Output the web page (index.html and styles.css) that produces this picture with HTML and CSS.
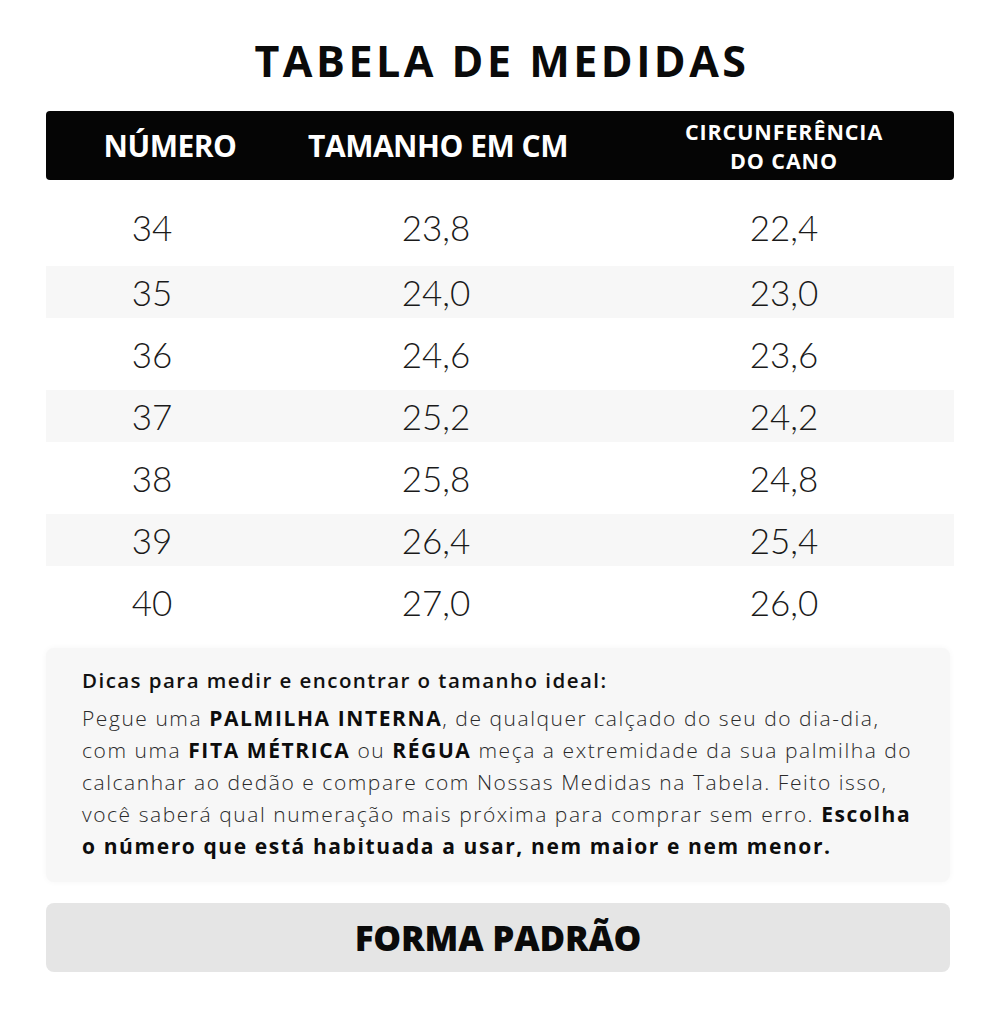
FILE: index.html
```html
<!DOCTYPE html>
<html lang="pt-BR">
<head>
<meta charset="utf-8">
<title>Tabela de Medidas</title>
<link rel="stylesheet" href="styles.css">
</head>
<body>
<main class="page">
  <h1 class="title">TABELA DE MEDIDAS</h1>

  <section class="table">
    <div class="head">
      <div class="hcell c1">NÚMERO</div>
      <div class="hcell c2">TAMANHO EM CM</div>
      <div class="hcell c3 small"><span class="hline">CIRCUNFERÊNCIA</span><span class="hline">DO CANO</span></div>
    </div>
    <div class="row tall"><div class="cell c1">34</div><div class="cell c2">23,8</div><div class="cell c3">22,4</div></div>
    <div class="row short alt"><div class="cell c1">35</div><div class="cell c2">24,0</div><div class="cell c3">23,0</div></div>
    <div class="row tall"><div class="cell c1">36</div><div class="cell c2">24,6</div><div class="cell c3">23,6</div></div>
    <div class="row short alt"><div class="cell c1">37</div><div class="cell c2">25,2</div><div class="cell c3">24,2</div></div>
    <div class="row tall"><div class="cell c1">38</div><div class="cell c2">25,8</div><div class="cell c3">24,8</div></div>
    <div class="row short alt"><div class="cell c1">39</div><div class="cell c2">26,4</div><div class="cell c3">25,4</div></div>
    <div class="row tall"><div class="cell c1">40</div><div class="cell c2">27,0</div><div class="cell c3">26,0</div></div>
  </section>

  <section class="tips">
    <h2 class="tips-title">Dicas para medir e encontrar o tamanho ideal:</h2>
    <p class="tips-text">Pegue uma <b>PALMILHA INTERNA</b>, de qualquer calçado do seu do dia-dia,<br>com uma <b>FITA MÉTRICA</b> ou <b>RÉGUA</b> meça a extremidade da sua palmilha do<br>calcanhar ao dedão e compare com Nossas Medidas na Tabela. Feito isso,<br>você saberá qual numeração mais próxima para comprar sem erro. <b>Escolha<br>o número que está habituada a usar, nem maior e nem menor.</b></p>
  </section>

  <div class="forma">FORMA PADRÃO</div>
</main>
</body>
</html>
```

FILE: styles.css
```css
* { box-sizing: border-box; }

html, body {
  margin: 0;
  padding: 0;
  background: #ffffff;
}

body {
  font-family: "Open Sans", "Liberation Sans", sans-serif;
  color: #111;
}

.page {
  width: 1000px;
  padding: 36px 46px 0 46px;
}

.title {
  margin: 0;
  text-align: center;
  font-family: "Open Sans", sans-serif;
  font-weight: 700;
  font-size: 43px;
  line-height: 50px;
  letter-spacing: 3.5px;
  color: #0a0a0a;
  padding-left: 4px;
}

.table {
  margin-top: 25px;
  width: 908px;
}

.head {
  display: grid;
  grid-template-columns: 248px 288px 1fr;
  align-items: center;
  height: 69px;
  background: #050505;
  border-radius: 4px;
  color: #fff;
}

.hcell {
  text-align: center;
  font-family: "Open Sans", sans-serif;
  font-weight: 700;
  font-size: 30px;
  letter-spacing: -0.5px;
  line-height: 32px;
}

.hcell.small {
  display: flex;
  flex-direction: column;
  align-items: center;
  gap: 0;
  font-size: 21.5px;
  line-height: 29px;
  letter-spacing: 0.9px;
}

.hline { display: block; }

.c3 { padding-left: 32px; }

.row {
  display: grid;
  grid-template-columns: 248px 288px 1fr;
  align-items: center;
}

.row.tall { height: 72px; }
.row.short { height: 52px; }
.row.alt { background: #f7f7f7; }

.table .row:nth-child(2) { height: 86px; padding-top: 8px; }

.cell {
  text-align: center;
  font-family: "Lato", "Open Sans", sans-serif;
  font-weight: 300;
  font-size: 35px;
  line-height: 40px;
  color: #1a1a1a;
}

.cell.c1 { padding-right: 36px; }
.cell.c2 { padding-right: 4px; }

.tips {
  margin-top: 10px;
  width: 904px;
  background: #f7f7f7;
  border-radius: 8px;
  box-shadow: 0 0 6px rgba(0,0,0,0.04);
  padding: 18px 20px 20px 36px;
}

.tips-title {
  margin: 0;
  font-family: "Open Sans", sans-serif;
  font-weight: 600;
  font-size: 20.5px;
  line-height: 28px;
  letter-spacing: 1.45px;
  color: #111;
}

.tips-text {
  margin: 8px 0 0 0;
  font-family: "Open Sans", sans-serif;
  font-weight: 300;
  font-size: 21px;
  line-height: 32px;
  letter-spacing: 1.55px;
  color: #2a2a2a;
  white-space: nowrap;
}

.tips-text b {
  font-weight: 700;
  letter-spacing: 1.6px;
  color: #0d0d0d;
}

.forma {
  margin-top: 21px;
  width: 904px;
  height: 69px;
  background: #e5e5e5;
  border-radius: 8px;
  display: flex;
  align-items: center;
  justify-content: center;
  font-family: "Open Sans", sans-serif;
  font-weight: 800;
  font-size: 35px;
  letter-spacing: -0.2px;
  color: #0a0a0a;
}
```
